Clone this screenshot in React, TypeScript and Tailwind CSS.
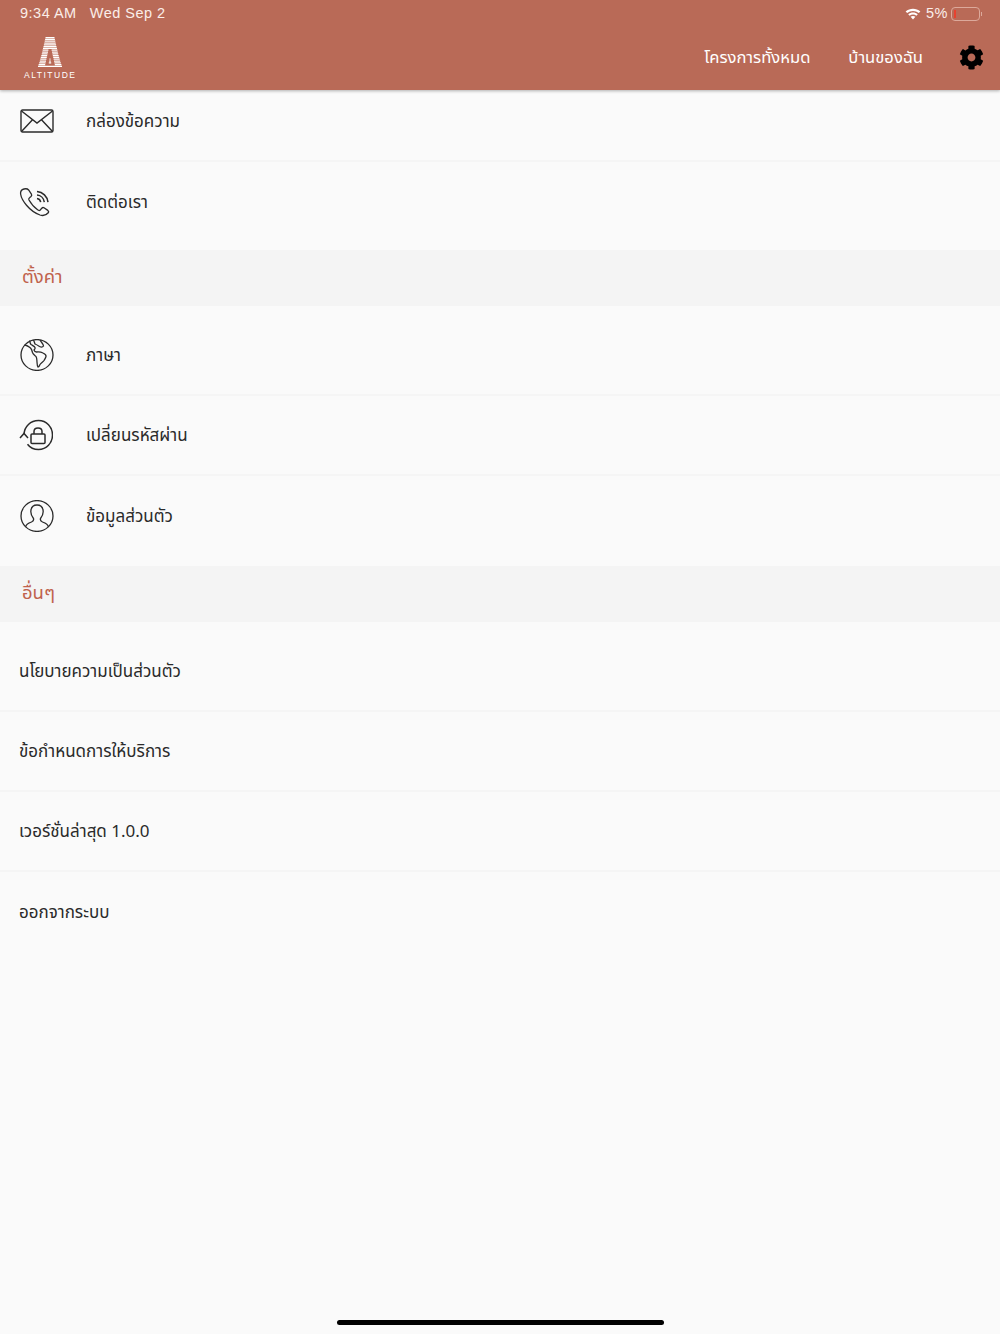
import { FaCog } from "react-icons/fa";
import type { ReactNode } from "react";

const thai = "font-['Noto_Sans_Thai','Noto_Sans','Liberation_Sans','DejaVu_Sans',sans-serif]";

function MailIcon() {
  return (
    <svg width="34" height="24" viewBox="0 0 34 24" fill="none" stroke="#2b2b2b" strokeWidth="1.4">
      <rect x="1" y="1" width="32" height="22" rx="1.5" />
      <path d="M1.5 2 L17 14 L32.5 2" />
      <path d="M1.5 22.5 L12.5 10.8 M32.5 22.5 L21.5 10.8" />
    </svg>
  );
}

function PhoneIcon() {
  return (
    <svg width="34" height="32" viewBox="0 0 34 32" fill="none" stroke="#2b2b2b" strokeWidth="1.3" className="-translate-x-[1px]">
      <path d="M5 3 C3 3.5 1.3 5.5 1.6 8 C2.5 14 10 25 21 29 C24 30 27.5 29 29.5 26.5 C30 25.5 29.6 25 28.8 24.4 L25 21.8 C24 21.2 23.5 21.4 22.8 22.2 L21.3 24 C20.5 24.7 19.5 24.5 18.6 23.8 C14.5 21 12 17.5 10 14 C9.5 13 9.7 12.3 10.5 11.7 L12 10.5 C12.8 9.8 12.9 9 12.4 8.2 L9.6 4 C8.6 2.8 6.5 2.6 5 3 Z" />
      <path d="M18 12.5 C20 12.8 21.4 14.2 21.7 16.2" strokeWidth="1.5" />
      <path d="M18 9 C21.8 9.3 24.8 12.2 25.3 16.2" strokeWidth="1.5" />
      <path d="M18 5.5 C23.8 6 28.4 10.4 29 16.2" strokeWidth="1.5" />
    </svg>
  );
}

function GlobeIcon() {
  return (
    <svg width="34" height="32" viewBox="0 0 34 32" fill="none" stroke="#2b2b2b" strokeWidth="1.3">
      <ellipse cx="17" cy="16" rx="16" ry="15.4" />
      <path d="M9.5 1.5 C10 3.5 10.5 5 11 5.5 C12.5 6.5 14.5 7 15 8.5 C15.5 10 14.5 10.5 14 11 C14.5 12.5 15.5 13 16.5 13 C18.5 12.8 21.5 13.2 23 14 C25 15 26.5 16 26 17.5 C25.5 19.5 24.5 20.5 24 21.5 C23 23 21 24 20 25.5 C19.5 27 18.8 28 18 28 C17 27 17.2 24.5 17 23 C16.8 20.5 17 19 16 17.5 C14.5 16 13 15 12.5 13.5 C12 11.5 11.5 10 10.5 9 C8.5 7.5 6.5 6 4.5 6" />
      <path d="M20 1 C21 3 23.5 5 23.5 7 C22.5 8.5 20.5 8 19.5 7.5 C18 6.5 16.5 5.5 15 5 C14.5 3.5 14 2 13.5 1" />
    </svg>
  );
}

function LockIcon() {
  return (
    <svg width="34" height="32" viewBox="0 0 34 32" fill="none" stroke="#2b2b2b" strokeWidth="1.5" className="-translate-x-[1px]">
      <path d="M5 15 C5.5 7.5 11.5 1.5 19.5 1.5 C27.5 1.5 33.5 8 33.5 16 C33.5 24 27.5 30.5 19.5 30.5 C15 30.5 11 28.5 8.5 25.2" />
      <path d="M1 19 L5 14.5 L9 19" />
      <rect x="12" y="15" width="14" height="9.5" rx="1" />
      <path d="M15 15 V12.5 C15 10 16.8 9 19 9 C21.2 9 23 10 23 12.5 V15" />
    </svg>
  );
}

function UserIcon() {
  return (
    <svg width="34" height="32" viewBox="0 0 34 32" fill="none" stroke="#2b2b2b" strokeWidth="1.3">
      <ellipse cx="17" cy="16" rx="16" ry="15.4" />
      <path d="M5.5 27 C6 24.5 8.5 23 11.5 22 C13.5 21 14 20 13.5 18.5 C11.5 16 10.5 12.5 11 10 C11.5 7 14 5 17 5 C20 5 22.5 7 23 10 C23.5 12.5 22.5 16 20.5 18.5 C20 20 20.5 21 22.5 22 C25.5 23 28 24.5 28.5 27" />
    </svg>
  );
}

function Logo() {
  return (
    <div className="flex flex-col items-center">
      <svg width="26" height="30" viewBox="0 0 26 30" stroke="#fff" strokeWidth="1.25" fill="none">
        <path d="M8.5 .6 H17.5 M8.1 2.4 H17.9 M7.7 4.2 H18.3 M7.3 6 H18.7 M6.9 7.8 H19.1 M6.5 9.6 H19.5 M6 11.4 H20 M5.6 13.2 H11.4 M14.6 13.2 H20.4 M5.2 15 H11 M15 15 H20.8 M4.8 16.8 H10.6 M15.4 16.8 H21.2 M4.3 18.6 H10.2 M15.8 18.6 H21.7 M3.8 20.4 H9.8 M16.2 20.4 H22.2 M3.3 22.2 H9.4 M12.5 22.2 H13.5 M16.6 22.2 H22.7 M2.8 24 H9 M12.2 24 H13.8 M17 24 H23.2 M2.2 25.8 H8.6 M11.8 25.8 H14.2 M17.4 25.8 H23.8 M1.6 27.6 H8.2 M17.8 27.6 H24.4 M1 29.4 H25" />
      </svg>
      <span className="mt-[4px] text-[8.5px] leading-[9px] tracking-[1.5px] text-white font-['Liberation_Sans',sans-serif]">
        ALTITUDE
      </span>
    </div>
  );
}

function Row({ icon, label, border = true, className = "h-20" }: { icon?: ReactNode; label: string; border?: boolean; className?: string }) {
  return (
    <div className={`flex items-center ${className} ${border ? "border-b-2 border-[#f5f5f5]" : ""}`}>
      {icon ? (
        <div className="ml-5 mr-[32px] flex w-[34px] justify-center">{icon}</div>
      ) : (
        <div className="w-[19px]" />
      )}
      <span className="pt-[3px] text-[17px] text-[#2a2a2a]">{label}</span>
    </div>
  );
}

function Section({ label }: { label: string }) {
  return (
    <div className="flex h-[56px] items-center bg-[#f4f4f4] pl-[22px] text-[18.5px] text-[#c0624c]">
      {label}
    </div>
  );
}

export default function App() {
  return (
    <div className={`flex h-[1334px] w-[1000px] flex-col overflow-hidden bg-[#fafafa] ${thai}`}>
      {/* header */}
      <header className="relative z-10 h-[90px] shrink-0 bg-[#b96a57] shadow-[0_1px_3px_rgba(0,0,0,0.3)]">
        <div className="flex h-[26px] items-center justify-between pl-5 pr-[18px] pt-[2px] text-[14.5px] tracking-[0.5px] text-[#fbeee9] font-['Liberation_Sans',sans-serif]">
          <div className="flex gap-[13px]">
            <span>9:34 AM</span>
            <span>Wed Sep 2</span>
          </div>
          <div className="flex items-center gap-[3px]">
            <svg width="16" height="12" viewBox="0 0 16 12" fill="#fff" className="mr-[2px]">
              <path d="M8 11.5 L5.6 8.8 C7 7.6 9 7.6 10.4 8.8 Z" />
              <path d="M4.6 7.7 L3.2 6.2 C5.9 3.9 10.1 3.9 12.8 6.2 L11.4 7.7 C9.4 6.1 6.6 6.1 4.6 7.7 Z" />
              <path d="M2.2 5.1 L.6 3.5 C4.8 -.2 11.2 -.2 15.4 3.5 L13.8 5.1 C10.4 2.2 5.6 2.2 2.2 5.1 Z" />
            </svg>
            <span>5%</span>
            <div className="flex items-center">
              <div className="h-[14px] w-[29px] rounded-[4px] border border-[#dca99b] p-[2px]">
                <div className="h-full w-[2px] bg-[#e8412f]" />
              </div>
              <div className="ml-[1px] h-[4px] w-[1px] bg-[#dca99b]" />
            </div>
          </div>
        </div>
        <div className="flex h-[64px] items-center justify-between pl-[24px] pr-[16px]">
          <Logo />
          <div className="flex items-center text-[16.6px] text-white">
            <span className="mr-[38px] pt-[1px]">โครงการทั้งหมด</span>
            <span className="mr-[36px] pt-[1px]">บ้านของฉัน</span>
            <FaCog size={25} color="#000" />
          </div>
        </div>
      </header>

      {/* group 1 */}
      <div className="h-[160px] shrink-0">
        <Row icon={<MailIcon />} label="กล่องข้อความ" className="h-[72px] pb-[8px]" />
        <Row icon={<PhoneIcon />} label="ติดต่อเรา" border={false} className="h-[80px]" />
      </div>
      <Section label="ตั้งค่า" />

      {/* group 2 */}
      <div className="h-[260px] shrink-0 pt-[10px]">
        <Row icon={<GlobeIcon />} label="ภาษา" />
        <Row icon={<LockIcon />} label="เปลี่ยนรหัสผ่าน" />
        <Row icon={<UserIcon />} label="ข้อมูลส่วนตัว" border={false} />
      </div>
      <Section label="อื่นๆ" />

      {/* group 3 */}
      <div className="pt-[10px]">
        <Row label="นโยบายความเป็นส่วนตัว" />
        <Row label="ข้อกำหนดการให้บริการ" />
        <Row label="เวอร์ชั่นล่าสุด 1.0.0" />
        <Row label="ออกจากระบบ" border={false} />
      </div>

      {/* home indicator */}
      <div className="mt-auto flex justify-center pb-[9px]">
        <div className="h-[5px] w-[327px] rounded-full bg-black" />
      </div>
    </div>
  );
}
